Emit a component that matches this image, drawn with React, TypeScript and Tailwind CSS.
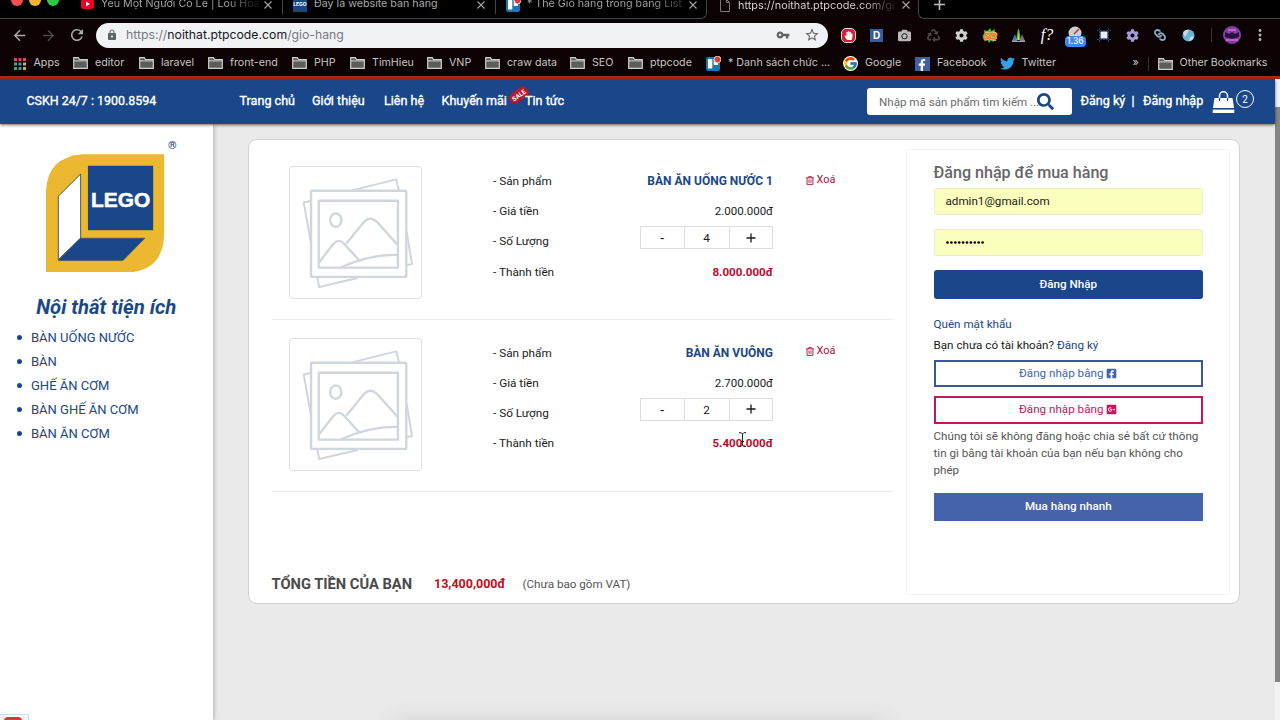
import React from 'react';
import { FaCamera, FaCog, FaFacebookF, FaFacebookSquare, FaGooglePlusSquare, FaHandPaper, FaLink, FaRecycle, FaSearch, FaTwitter } from 'react-icons/fa';
import { FcGoogle } from 'react-icons/fc';
import { MdArrowBack, MdArrowForward, MdLock, MdMoreVert, MdRefresh, MdStarBorder, MdVpnKey } from 'react-icons/md';

interface CartItem {
    name: string;
    price: string;
    quantity: number;
    total: string;
}

const cartItems: CartItem[] = [
    { name: 'BÀN ĂN UỐNG NƯỚC 1', price: '2.000.000đ', quantity: 4, total: '8.000.000đ' },
    { name: 'BÀN ĂN VUÔNG', price: '2.700.000đ', quantity: 2, total: '5.400.000đ' },
];

const categories = ['BÀN UỐNG NƯỚC', 'BÀN', 'GHẾ ĂN CƠM', 'BÀN GHẾ ĂN CƠM', 'BÀN ĂN CƠM'];

const folders = [
    { label: 'editor', width: 'w-[66px]' },
    { label: 'laravel', width: 'w-[69px]' },
    { label: 'front-end', width: 'w-[84px]' },
    { label: 'PHP', width: 'w-[58px]' },
    { label: 'TimHieu', width: 'w-[77px]' },
    { label: 'VNP', width: 'w-[58px]' },
    { label: 'craw data', width: 'w-[85px]' },
    { label: 'SEO', width: 'w-[58px]' },
    { label: 'ptpcode', width: 'w-[78px]' },
];

const FolderIcon = () => (
    <svg className="w-[15px] h-3 shrink-0" viewBox="0 0 15 12">
        <path d="M.7.7h4.6l1.2 1.8h7.8v8.8H.7z" fill="#5c5c5c" stroke="#d0d0d0" strokeWidth="1.2" />
        <path d="M1 3.9h13.3" stroke="#d0d0d0" strokeWidth="1" />
    </svg>
);

const TrashIcon = () => (
    <svg className="w-[8px] h-[9px] shrink-0" viewBox="0 0 9 10" fill="none" stroke="currentColor" strokeWidth="1">
        <path d="M0 2h9M3 2V.6h3V2M1.2 2v7.4h6.6V2M3.4 3.8v3.8M5.6 3.8v3.8" />
    </svg>
);

const TrelloIcon = () => (
    <svg className="w-[15px] h-[15px] shrink-0" viewBox="0 0 15 15">
        <rect y="1" width="14" height="14" rx="2" fill="#1878b4" />
        <rect x="2" y="3" width="4.3" height="9.5" rx=".6" fill="#fff" />
        <rect x="7.7" y="3" width="4.3" height="6" rx=".6" fill="#fff" />
        <circle cx="11.5" cy="3.5" r="3.4" fill="#d8403f" stroke="#fff" strokeWidth=".7" />
    </svg>
);

const CloseIcon = () => (
    <svg className="w-2 h-2 shrink-0" viewBox="0 0 8 8" stroke="#a5a5a5" strokeWidth="1.1">
        <path d="M.5.5l7 7M7.5.5l-7 7" />
    </svg>
);

const TabStrip = () => (
    <div className="h-[19px] overflow-hidden bg-[#0c0203]">
        <div className="-mt-[9px] flex h-7 items-center text-[10.7px] text-[#a9a9a9]">
            <div className="flex h-full w-[707px] shrink-0 items-center rounded-br-[6px] border-b border-r border-[#444] bg-black pl-[11px]">
                <span className="mb-[10px] w-3 h-3 rounded-full bg-[#fb4d4f]" />
                <span className="mb-[10px] ml-1.5 w-3 h-3 rounded-full bg-[#fdb32e]" />
                <span className="mb-[10px] ml-1.5 w-3 h-3 rounded-full bg-[#2ac940]" />
                <svg className="mb-0.5 ml-[22px] w-[13px] h-[10px] shrink-0" viewBox="0 0 13 10">
                    <rect width="13" height="10" rx="2.5" fill="#f00028" />
                    <path d="M5 2.7l4 2.3-4 2.3z" fill="#fff" />
                </svg>
                <span className="ml-[7px] w-[158px] overflow-hidden whitespace-nowrap bg-gradient-to-r from-[#a9a9a9] from-80% to-[#111] bg-clip-text text-transparent">Yêu Một Người Có Lẽ | Lou Hoà</span>
                <span className="ml-[5px] flex"><CloseIcon /></span>
                <span className="ml-[10px] h-[18px] w-px bg-[#444]" />
                <span className="ml-[10px] mt-px flex h-[14px] w-[14px] items-center justify-center bg-[#174689] text-[5px] font-bold text-white">LEGO</span>
                <span className="ml-[7px] w-[155px] whitespace-nowrap">Đây là website bán hàng</span>
                <span className="ml-[8px] flex"><CloseIcon /></span>
                <span className="ml-[10px] h-[18px] w-px bg-[#444]" />
                <span className="ml-[10px] flex"><TrelloIcon /></span>
                <span className="ml-[6px] w-[155px] overflow-hidden whitespace-nowrap bg-gradient-to-r from-[#a9a9a9] from-80% to-[#333] bg-clip-text text-transparent">* Thẻ Giỏ hàng trong bảng List</span>
                <span className="ml-[7px] flex"><CloseIcon /></span>
            </div>
            <div className="flex h-full w-[211px] shrink-0 items-center pl-[13px]">
                <svg className="w-[10px] h-[13px] shrink-0" viewBox="0 0 10 13" fill="none" stroke="#777"><path d="M.5.5h6l3 3v9h-9zM6.5.5v3h3" /></svg>
                <span className="ml-2 w-[156px] overflow-hidden whitespace-nowrap bg-gradient-to-r from-[#dedede] from-80% to-[#222] bg-clip-text text-[10.9px] text-transparent">https://noithat.ptpcode.com/gi</span>
                <span className="ml-2 flex"><CloseIcon /></span>
            </div>
            <div className="flex h-full flex-1 items-center rounded-bl-[6px] border-b border-l border-[#444] bg-black pl-[15px]">
                <svg className="w-[11px] h-[11px]" viewBox="0 0 11 11" stroke="#bbb" strokeWidth="1.6"><path d="M5.5 0v11M0 5.5h11" /></svg>
            </div>
        </div>
    </div>
);

const Extensions = () => (
    <div className="ml-[6px] flex items-center">
        <span className="flex w-[28.4px] justify-center">
            <span className="flex h-[15px] w-[15px] items-center justify-center rounded-[5px] border border-[#ddd] bg-[#d2203a] text-white"><FaHandPaper size={9} /></span>
        </span>
        <span className="flex w-[28.4px] justify-center">
            <span className="flex h-[13px] w-[13px] items-center justify-center bg-[#3a5b9e] text-[10px] font-bold text-white">D</span>
        </span>
        <span className="flex w-[28.4px] justify-center text-[#b9b9b9]"><FaCamera size={13} /></span>
        <span className="flex w-[28.4px] justify-center text-[#474747]"><FaRecycle size={13} /></span>
        <span className="flex w-[28.4px] justify-center text-[#d0d0d0]"><FaCog size={13} /></span>
        <span className="flex w-[28.4px] justify-center">
            <svg className="w-[16px] h-[15px]" viewBox="0 0 16 15">
                <path d="M8 0l1.5 3L13 1l-.5 3.5L16 6l-2.5 2 2 3-3.5.5L12 14l-3-1.5L7 15l-1.5-3L2 13.5 3 10 0 8l3-2-1.5-4L5.500 3z" fill="#55b32d" />
                <text x="1" y="11.5" fontSize="11" fontWeight="900" fontStyle="italic" fill="#ff6f20" stroke="#fff3d8" strokeWidth=".3" textLength="14">SQ</text>
            </svg>
        </span>
        <span className="flex w-[28.4px] justify-center">
            <svg className="w-[13px] h-[13px]" viewBox="0 0 13 13">
                <path d="M0 12L3 5l2 7z" fill="#4a78d0" />
                <path d="M8 12l2-7 3 7z" fill="#8a5bb5" />
                <path d="M4 11L6 0h1l2 11z" fill="#4fb32f" />
                <path d="M5.7 11l.8-9 .8 9z" fill="#e8d53a" />
                <path d="M0 12.3h13" stroke="#ccc" />
            </svg>
        </span>
        <span className="flex w-[28.4px] justify-center font-['Liberation_Serif',serif] text-[16px] leading-4 italic text-white">f?</span>
        <span className="relative flex h-4 w-[28.4px] justify-center">
            <svg className="-mt-px h-[14px] w-[14px]" viewBox="0 0 14 14"><circle cx="7" cy="7" r="6.5" fill="#cfcfcf" /><path d="M6 8l5-5" stroke="#b33" strokeWidth="1.5" /></svg>
            <span className="absolute top-[9px] flex h-[11px] w-[21px] items-center justify-center rounded-sm bg-[#4285f4] text-[8.5px] font-medium text-white">1.36</span>
        </span>
        <span className="flex w-[28.4px] justify-center">
            <svg className="w-[14px] h-[14px]" viewBox="0 0 14 14"><path d="M2.5 0v14M11.5 0v14M0 2.5h14M0 11.5h14" stroke="#173f7a" strokeDasharray="2 1" /><rect x="3.5" y="3.5" width="7" height="7" fill="#e3effc" /></svg>
        </span>
        <span className="flex w-[28.4px] justify-center text-[#a79ade]"><FaCog size={13} /></span>
        <span className="flex w-[28.4px] justify-center text-[#86a9c8]"><FaLink size={12} className="rotate-90" /></span>
        <span className="flex w-[28.4px] justify-center">
            <svg className="w-[13px] h-[13px]" viewBox="0 0 13 13"><circle cx="6.5" cy="6.5" r="6" fill="#68b3d6" /><path d="M1 4q2-4 6-3L5 5 3 8zM8 8l4-1-2 4-3 1z" fill="#c5dde8" /></svg>
        </span>
    </div>
);

const Toolbar = () => (
    <div className="flex h-8 items-center text-[#ababab]">
        <MdArrowBack size={17} className="ml-[11px]" />
        <MdArrowForward size={17} className="ml-[12px] text-[#4a4a4a]" />
        <MdRefresh size={18} className="ml-[11px]" />
        <div className="ml-[10px] flex h-[25px] w-[732px] items-center rounded-full bg-[#f0f2f6] text-[#5f6368]">
            <MdLock size={12} className="ml-[10px]" />
            <span className="ml-2 w-[643px] text-[12.25px] text-[#777b80]">
                https://<span className="text-[#17181a]">noithat.ptpcode.com</span>/gio-hang
            </span>
            <MdVpnKey size={14} className="ml-[7px]" />
            <MdStarBorder size={16} className="ml-[13.5px]" />
        </div>
        <Extensions />
        <span className="ml-[8px] h-[14px] w-px bg-[#333]" />
        <svg className="ml-[11px] w-[18px] h-[18px]" viewBox="0 0 18 18">
            <circle cx="9" cy="9" r="9" fill="#8140a8" />
            <path d="M2 6l4 2 3-2 3 2 4-2v5l-7 2-7-2z" fill="#25123d" />
            <path d="M3 14h12M5 4h8" stroke="#d868c9" strokeWidth="1.5" />
        </svg>
        <MdMoreVert size={18} className="ml-[10px]" />
    </div>
);

const Bookmarks = () => (
    <div className="flex h-[25px] items-center whitespace-nowrap pl-[11px] text-[10.7px] text-[#c4c4c4]">
        <svg className="w-3 h-3 ml-[2.5px] shrink-0" viewBox="0 0 12 12">
            <path d="M0 1.5h3M4.5 1.5h3M9 1.5h3" stroke="#d8485c" strokeWidth="3" />
            <path d="M0 6h3" stroke="#4aa35e" strokeWidth="3" />
            <path d="M4.5 6h3" stroke="#4a83e0" strokeWidth="3" />
            <path d="M9 6h3" stroke="#dca93a" strokeWidth="3" />
            <path d="M0 10.5h3M4.5 10.5h3" stroke="#4aa35e" strokeWidth="3" />
            <path d="M9 10.5h3" stroke="#dca93a" strokeWidth="3" />
        </svg>
        <span className="ml-2 w-[39.5px]">Apps</span>
        {folders.map((folder) => (
            <span key={folder.label} className={`flex shrink-0 items-center gap-[7px] ${folder.width}`}>
                <FolderIcon />
                {folder.label}
            </span>
        ))}
        <TrelloIcon />
        <span className="ml-[7px] w-[115px]">* Danh sách chức ...</span>
        <span className="rounded-full bg-white"><FcGoogle size={15} /></span>
        <span className="ml-[7px] w-[50px]">Google</span>
        <span className="flex h-[14px] w-[15px] items-end justify-end bg-[#4060a5] pr-0.5 text-white"><FaFacebookF size={12} /></span>
        <span className="ml-[7px] w-[62.5px]">Facebook</span>
        <FaTwitter size={15} className="text-[#2ea3ea]" />
        <span className="ml-[7px] w-[111px]">Twitter</span>
        <span className="w-[15px]">»</span>
        <span className="mr-[9px] h-[14px] w-px bg-[#333]" />
        <FolderIcon />
        <span className="ml-[7px]">Other Bookmarks</span>
    </div>
);

const BrowserBar = () => (
    <div className="h-[79px] shrink-0 border-b-[3px] border-[#ae2524] bg-[#0c0203] font-['Inter',sans-serif]">
        <TabStrip />
        <Toolbar />
        <Bookmarks />
    </div>
);

const SiteHeader = () => (
    <header className="relative z-10 flex h-[45px] shrink-0 items-center whitespace-nowrap bg-[#194789] text-[12.6px] text-white shadow-[0_1px_3px_rgba(0,0,0,0.6)] [-webkit-text-stroke:0.35px]">
        <span className="ml-[26.5px] w-[213px] text-[12.45px]">CSKH 24/7 : 1900.8594</span>
        <span className="w-[72.5px]">Trang chủ</span>
        <span className="w-[72px]">Giới thiệu</span>
        <span className="w-[57.5px]">Liên hệ</span>
        <span className="relative w-[83.5px]">
            Khuyến mãi
            <svg className="absolute -top-[7px] left-[65px] w-[24px] h-[20px]" viewBox="0 0 24 20">
                <g transform="rotate(-36 12 10)">
                    <rect x="1.5" y="4.5" width="21" height="11" rx="5" fill="#c4122f" />
                    <circle cx="20" cy="9" r="1.2" fill="none" stroke="#82263f" />
                    <text x="4" y="12.5" fontSize="6.5" fontWeight="bold" fill="#fff" stroke="none">SALE</text>
                </g>
            </svg>
        </span>
        <span className="relative w-[342px]">Tin tức</span>
        <div className="flex h-[27px] w-[205px] items-center rounded-[3px] bg-white pl-[12px] [-webkit-text-stroke:0]">
            <span className="mt-0.5 w-[158px] text-[11.6px] text-[#6b6b6b]">Nhập mã sản phẩm tìm kiếm ...</span>
            <FaSearch size={17} className="shrink-0 text-[#194789]" />
        </div>
        <span className="ml-[8.5px] w-[51px]">Đăng ký</span>
        <span className="w-[11.5px]">|</span>
        <span className="w-[69px]">Đăng nhập</span>
        <svg className="w-[23px] h-[22px]" viewBox="0 0 23 22">
            <path d="M2.5 7h18l1.5 10H1z" fill="#fff" />
            <path d="M.7 18.6h21.6V22H.7z" fill="#fff" />
            <path d="M7.5 10V4.8a4 4 0 0 1 8 0V10" fill="none" stroke="#fff" strokeWidth="1.5" />
            <path d="M7.5 7v3M15.5 7v3" stroke="#194789" strokeWidth="1.2" />
        </svg>
        <span className="mb-[5px] ml-px flex h-[18px] w-[18px] items-center justify-center rounded-full border border-white text-[10px] [-webkit-text-stroke:0]">2</span>
    </header>
);

const Sidebar = () => (
    <aside className="relative flex w-[212.5px] shrink-0 flex-col bg-white text-[#194789] shadow-[1px_0_4px_rgba(0,0,0,0.25)]">
        <div className="relative ml-[46px] mt-[29.5px] w-[118.5px] h-[118.5px]">
            <svg className="w-full h-full" viewBox="138 100 356 356">
                <path d="M250 101H493V340Q490 450 385 456H138V212Q142 108 250 101z" fill="#ecb731" />
                <path d="M264 135h196v194H264z" fill="#194789" />
                <path d="M175 227l67-67v193l-67 64z" fill="#fff" stroke="#24435a" strokeWidth="2.5" />
                <path d="M175 420l66-67h194l-66 67z" fill="#194789" stroke="#3b5560" strokeWidth="2" />
                <text x="273" y="260" fontSize="62" fontWeight="bold" fontFamily="Liberation Sans, sans-serif" fill="#fff" stroke="#fff" strokeWidth="1.5" textLength="178" lengthAdjust="spacingAndGlyphs">LEGO</text>
            </svg>
            <span className="absolute -top-[14px] left-[122px] text-[11px] leading-none font-bold">®</span>
        </div>
        <h2 className="mt-[21.5px] text-center text-[20.3px] leading-[26px] font-bold italic">Nội thất tiện ích</h2>
        <ul className="mt-[6px] text-[13px] leading-6">
            {categories.map((category) => (
                <li key={category} className="flex items-center pl-[17px]">
                    <span className="mr-[9px] h-[5px] w-[5px] rounded-full bg-[#194789]" />
                    {category}
                </li>
            ))}
        </ul>
        <div className="mt-auto h-[6px] w-[29px] overflow-hidden border-r border-t border-[#d5dfe2] bg-[#f8f8f8] pl-[4px] pt-[2px]">
            <div className="h-2 w-[18px] rounded-sm bg-[#d93636]" />
        </div>
    </aside>
);

const PlaceholderImage = () => (
    <div className="h-[133px] w-[133px] rounded-[4px] border border-[#dfe0e2]">
        <svg className="h-full w-full" viewBox="91 82 392 392" fill="none" stroke="#d0d6de" strokeWidth="7" strokeLinejoin="round">
            <path d="M276 152l133-33 8 33M152 184l-20 4 21 118M440 275l16 97-17 4M173 413l5 28 116-27" strokeWidth="6" />
            <rect x="154" y="153" width="285" height="258" rx="3" />
            <rect x="177" y="183" width="237" height="200" />
            <ellipse cx="228" cy="241" rx="17" ry="20" />
            <path d="M178 367l44-56q15-16 30 0l46 50M259 312l54-66q18-18 38 0l62 69M244 382q90-40 169-37" />
        </svg>
    </div>
);

const CartRow: React.FC<{ item: CartItem }> = ({ item }) => (
    <div className="flex h-[171.5px] border-b border-[#ededed] pl-[17px] pt-[17.5px] text-[11.75px] text-[#1a1a1a]">
        <PlaceholderImage />
        <div className="ml-[71.5px] w-[280px] leading-[30.2px]">
            <div className="flex justify-between">
                <span>- Sản phẩm</span>
                <span className="text-[12px] font-bold text-[#194789]">{item.name}</span>
            </div>
            <div className="flex justify-between">
                <span>- Giá tiền</span>
                <span className="text-[11.5px]">{item.price}</span>
            </div>
            <div className="flex justify-between">
                <span>- Số Lượng</span>
                <div className="flex h-[23px] w-[133px] border border-[#dcdcdc] text-center leading-[22px]">
                    <span className="w-[42.5px] text-[14px]">-</span>
                    <span className="w-[46px] border-x border-[#dcdcdc]">{item.quantity}</span>
                    <span className="flex flex-1 items-center justify-center">
                        <svg className="w-[10px] h-[10px]" viewBox="0 0 10 10" stroke="#1a1a1a" strokeWidth="1.3"><path d="M5 .5v9M.5 5h9" /></svg>
                    </span>
                </div>
            </div>
            <div className="flex justify-between">
                <span>- Thành tiền</span>
                <span className="text-[11.6px] font-bold text-[#bd0a2c]">{item.total}</span>
            </div>
        </div>
        <button className="ml-[32.5px] mt-[5px] flex h-[18px] items-center gap-[3px] text-[10.9px] text-[#b0103c]">
            <TrashIcon />
            Xoá
        </button>
    </div>
);

const LoginPanel = () => (
    <div className="h-[446px] w-[324px] border border-[#f2f2f2] pl-[27px] pt-[12px] text-[11.65px] text-[#1a1a1a]">
        <div className="flex w-[269.5px] flex-col">
            <h3 className="h-[26.5px] text-[16.1px] leading-[22px] font-medium text-[#666]">Đăng nhập để mua hàng</h3>
            <div className="flex h-[27px] items-center rounded-[3px] border border-[#ececcb] bg-[#faffbd] pl-[11px] pt-px">admin1@gmail.com</div>
            <div className="mt-[13.5px] flex h-[27px] items-center rounded-[3px] border border-[#ececcb] bg-[#faffbd] pl-[11px]">
                <svg className="w-[39px] h-[3px]" viewBox="0 0 39 3">
                    {Array.from({ length: 10 }, (_, i) => (
                        <circle key={i} cx={1.5 + i * 3.9} cy="1.5" r="1.35" fill="#000" />
                    ))}
                </svg>
            </div>
            <button className="mt-[14.5px] h-[29px] rounded-[3px] bg-[#194789] font-medium text-white">Đăng Nhập</button>
            <a className="mt-[16px] leading-[18px] text-[#194789]">Quên mật khẩu</a>
            <p className="mt-[3px] leading-[18px]">Bạn chưa có tài khoản? <a className="text-[#194789]">Đăng ký</a></p>
            <button className="mt-[5.5px] flex h-[27.5px] items-center justify-center gap-[3px] border-2 border-[#3b5998] text-[#4267b2]">
                Đăng nhập bằng <FaFacebookSquare size={11} />
            </button>
            <button className="mt-[9px] flex h-[27.5px] items-center justify-center gap-[3px] border-2 border-[#c2185b] text-[#c2185b]">
                Đăng nhập bằng <FaGooglePlusSquare size={11} />
            </button>
            <p className="mt-[4.5px] whitespace-nowrap leading-[17px] text-[#555]">
                Chúng tôi sẽ không đăng hoặc chia sẻ bất cứ thông<br />
                tin gì bằng tài khoản của bạn nếu bạn không cho<br />
                phép
            </p>
            <button className="mt-[14px] h-[28px] bg-[#4562ab] font-medium text-white">Mua hàng nhanh</button>
        </div>
    </div>
);

const App = () => (
    <div className="relative flex h-[720px] w-[1280px] flex-col overflow-hidden bg-[#eaeaea] font-['Roboto',sans-serif]">
        <BrowserBar />
        <div className="flex min-h-0 flex-1">
            <div className="flex w-[1275.5px] flex-col">
                <SiteHeader />
                <div className="flex flex-1">
                    <Sidebar />
                    <main className="ml-[35.5px] mt-[15px] flex h-[465px] w-[991.5px] rounded-[9px] border border-[#d2d2d2] bg-white pl-[22.5px] pt-[8.5px]">
                        <section className="w-[621px]">
                            {cartItems.map((item) => (
                                <CartRow key={item.name} item={item} />
                            ))}
                            <div className="mt-[80px] flex items-center leading-6">
                                <span className="w-[162.5px] text-[14.7px] font-bold text-[#4a4a4a]">TỔNG TIỀN CỦA BẠN</span>
                                <span className="w-[88.5px] text-[12.5px] font-bold text-[#c0101c]">13,400,000đ</span>
                                <span className="text-[11.65px] text-[#555]">(Chưa bao gồm VAT)</span>
                            </div>
                        </section>
                        <div className="ml-[13px]">
                            <LoginPanel />
                        </div>
                    </main>
                </div>
            </div>
            <div className="w-[5px] bg-[#f2f2f2] pt-[28px]">
                <div className="h-[575px] bg-[#858585]" />
            </div>
        </div>
        {/* text cursor */}
        <svg className="absolute left-[738px] top-[432px] w-[9px] h-[15px]" viewBox="0 0 9 15" fill="none" stroke="#222" strokeWidth="1">
            <path d="M1 .5q3 0 3.5 1.5Q5 .5 8 .5M4.5 2v11M1 14.5q3 0 3.5-1.5.5 1.5 3.5 1.5M3 9.5h3" />
        </svg>
        {/* dock shadow */}
        <div className="absolute left-[400px] top-[727px] h-4 w-[480px] shadow-[0_0_24px_6px_rgba(0,0,0,0.1)]" />
    </div>
);

export default App;
